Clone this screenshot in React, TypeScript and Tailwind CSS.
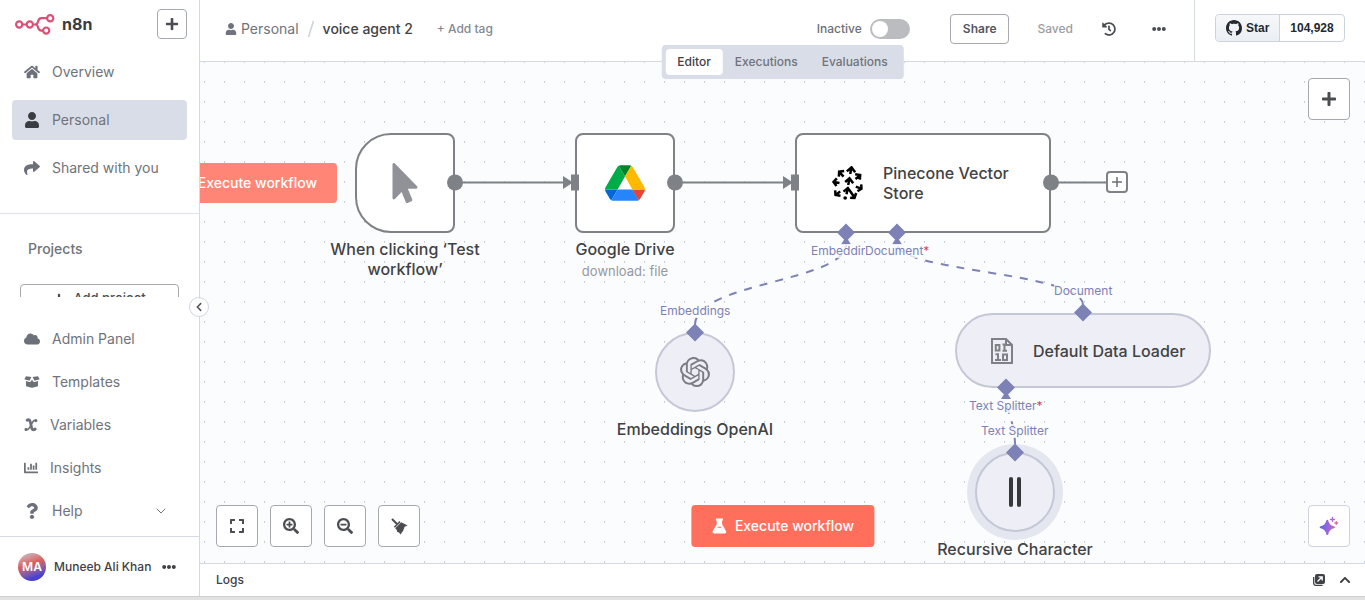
import type { ReactNode } from "react";
import {
  FaChartBar, FaChevronLeft, FaChevronUp, FaCloud, FaEllipsisH, FaExpand, FaFlask, FaHistory, FaHome,
  FaMousePointer, FaPlus, FaQuestion, FaSearchMinus, FaSearchPlus, FaShare, FaUser,
} from "react-icons/fa";
import { SiOpenai } from "react-icons/si";
import { ChevronDown } from "lucide-react";

function N8nLogo() {
  return (
    <svg width="40" height="21" viewBox="0 0 40 21" fill="none" stroke="#dc4f76" strokeWidth="2.2" aria-hidden="true">
      <circle cx="4.2" cy="10.5" r="3.1" />
      <circle cx="14.8" cy="10.5" r="3.1" />
      <circle cx="35.2" cy="4.2" r="3.1" />
      <circle cx="31.2" cy="16.6" r="3.1" />
      <path d="M7.4 10.5h4.2M18 10.5h2c1.800 0 2.600-1 3-2.800.5-2.300 1.500-3.500 3.500-3.500h5.600M20 10.500c1.800 0 2.600 1 3 2.800.5 2.300 1.500 3.300 3.300 3.300h1.700" />
    </svg>
  );
}

function GithubMark() {
  return (
    <svg width="16" height="16" viewBox="0 0 16 16" fill="currentColor" aria-hidden="true">
      <path d="M8 0C3.58 0 0 3.58 0 8c0 3.54 2.29 6.53 5.47 7.59.4.07.55-.17.55-.38 0-.19-.01-.82-.01-1.49-2.01.37-2.53-.49-2.69-.94-.09-.23-.48-.94-.82-1.13-.28-.15-.68-.52-.01-.53.63-.01 1.08.58 1.23.82.72 1.21 1.87.87 2.33.66.07-.52.28-.87.51-1.07-1.78-.2-3.64-.89-3.64-3.95 0-.87.31-1.59.82-2.15-.08-.2-.36-1.02.08-2.12 0 0 .67-.21 2.2.82.64-.18 1.32-.27 2-.27s1.36.09 2 .27c1.53-1.04 2.2-.82 2.2-.82.44 1.1.16 1.92.08 2.12.51.56.82 1.27.82 2.15 0 3.07-1.87 3.75-3.65 3.95.29.25.54.73.54 1.48 0 1.07-.01 1.93-.01 2.2 0 .21.15.46.55.38A8.013 8.013 0 0 0 16 8c0-4.42-3.58-8-8-8z" />
    </svg>
  );
}

function VariableIcon() {
  return (
    <svg width="14" height="16" viewBox="0 0 14 16" fill="none" stroke="currentColor" strokeLinecap="round" aria-hidden="true">
      <path d="M3 3.200C5.200 2 6 3.300 6.600 6l.8 4c.6 2.800 1.600 3.600 3.800 2" strokeWidth="2.800" />
      <path d="M12 3.300C9.800 2.500 8.800 4.500 7 8c-1.600 3.200-2.800 5.500-5.200 4.700" strokeWidth="1.500" />
      <circle cx="11.900" cy="3.600" r=".9" strokeWidth="1.300" />
      <circle cx="2" cy="12.400" r=".9" strokeWidth="1.300" />
    </svg>
  );
}

function OpenBoxIcon() {
  return (
    <svg width="16" height="16" viewBox="0 0 16 16" fill="currentColor" aria-hidden="true">
      <path d="M2 2.200 7.400 3 5.800 6.200a.8.8 0 0 1-.9.400L1 5.500a.6.600 0 0 1-.4-.8zM14 2.200 8.600 3l1.600 3.200a.8.8 0 0 0 .9.400L15 5.500a.6.600 0 0 0 .4-.8z" />
      <path d="M2 7l3.300.9a1.500 1.500 0 0 0 1.700-.7L8 5.400l1 1.800a1.500 1.500 0 0 0 1.700.7L14 7v4.600a1 1 0 0 1-.8 1L8.300 13.700h-.6l-4.900-1.100a1 1 0 0 1-.8-1z" />
    </svg>
  );
}

function DriveIcon() {
  return (
    <svg width="40" height="36" viewBox="0 0 87.3 78" aria-hidden="true">
      <path fill="#0066da" d="m6.600 66.850 3.850 6.650c.8 1.400 1.950 2.500 3.300 3.300l13.750-23.800H0c0 1.550.4 3.100 1.200 4.500z" />
      <path fill="#00ac47" d="M43.650 25 29.900 1.200c-1.350.8-2.500 1.900-3.300 3.300l-25.400 44A9.060 9.060 0 0 0 0 53h27.500z" />
      <path fill="#ea4335" d="M73.550 76.800c1.350-.8 2.500-1.900 3.300-3.300l1.600-2.750 7.650-13.250c.8-1.400 1.200-2.950 1.200-4.500H59.798l5.852 11.500z" />
      <path fill="#00832d" d="M43.650 25 57.400 1.200C56.050.4 54.500 0 52.900 0H34.400c-1.600 0-3.150.45-4.500 1.200z" />
      <path fill="#2684fc" d="M59.800 53H27.500L13.750 76.800c1.350.8 2.900 1.200 4.500 1.200h50.800c1.600 0 3.150-.45 4.500-1.200z" />
      <path fill="#ffba00" d="m73.400 26.500-12.700-22c-.8-1.400-1.950-2.500-3.300-3.300L43.650 25 59.800 53h27.450c0-1.550-.4-3.100-1.200-4.500z" />
    </svg>
  );
}

function PineconeIcon() {
  return (
    <svg width="31" height="34" viewBox="0 0 92 102" fill="none" stroke="#000" strokeWidth="7.500" aria-hidden="true">
      <circle cx="39" cy="96" r="5.500" fill="#000" stroke="none" />
      <path d="M43 85l4-18M34 77l13-11 11 15M48 57l4-18M39 48l13-11 11 15M54 24l4-18M44 16l14-12 11 15" />
      <path d="M34 32 22 18M20 32l1-15 15-2M22 51 5 48M14 37 4 48l9 12M24 76 11 87M9 73l1 14 15 2M57 80l10 14M54 95l13 1 5-15M71 62l16 6M87 55l1 13-12 8M70 39l14-11M69 25l15 2-1 14" />
    </svg>
  );
}

function BinaryIcon() {
  return (
    <svg width="24" height="28" viewBox="0 0 24 28" fill="none" stroke="#7f8187" strokeWidth="2" aria-hidden="true">
      <path d="M2 2h14l6 6v18H2zM16 2v6h6" />
      <path d="M5.800 8h3.600v5.500H5.800zM14.500 14V7.500h-2M12.500 13.700h4.500M13 17.500h4v5.500h-4zM8 23.500v-6.300H5.500M5 23h6" />
    </svg>
  );
}

function TidyIcon() {
  return (
    <svg width="17" height="17" viewBox="0 0 17 17" aria-hidden="true">
      <path d="M1 1 6 6" stroke="currentColor" strokeWidth="2" />
      <path d="M3.400 9.200 9 3.600" stroke="currentColor" strokeWidth="1.500" />
      <path fill="currentColor" d="M4.200 10.300 10.200 4.300 16.600 7.500l-3 1.300-1.400 4L9.400 16.500 8 14.400l-2-.6-.2-1.700z" />
    </svg>
  );
}

function LogWindowIcon() {
  return (
    <svg width="12" height="12" viewBox="0 0 12 12" fill="none" aria-hidden="true">
      <path d="M9.500 11.300H2.700A2 2 0 0 1 .7 9.300V3" stroke="currentColor" strokeWidth="1.300" />
      <rect x="2" y="0" width="10" height="10" rx="2" fill="currentColor" />
      <path d="M4.500 7.500l4.500-4.500M5.500 2.800h3.700v3.700" stroke="#fff" strokeWidth="1.300" />
    </svg>
  );
}

function AssistantIcon() {
  return (
    <svg width="20" height="20" viewBox="0 0 20 20" aria-hidden="true">
      <defs>
        <linearGradient id="assistant" gradientUnits="userSpaceOnUse" x1="2" y1="10" x2="19" y2="12">
          <stop offset="0" stopColor="#6068e8" />
          <stop offset=".5" stopColor="#a566d8" />
          <stop offset="1" stopColor="#e8708c" />
        </linearGradient>
      </defs>
      <path fill="url(#assistant)" d="M8.300 3.700c.6 0 .8.4 1 1 .8 3 2.600 4.800 5.600 5.600.6.2 1 .4 1 1s-.4.800-1 1c-3 .8-4.800 2.600-5.600 5.600-.2.600-.4 1-1 1s-.8-.4-1-1c-.8-3-2.600-4.800-5.600-5.600-.6-.2-1-.4-1-1s.4-.8 1-1c3-.8 4.800-2.600 5.600-5.600.2-.6.4-1 1-1z" />
      <path stroke="url(#assistant)" strokeWidth="1.300" strokeLinecap="round" d="M13.500 1.500v4M11.500 3.501 15.500 3.500M17.300 5.600v2.800M15.900 7.001 18.700 7" />
    </svg>
  );
}

function NavItem({ icon, label, active = false, tall = false, children }: {
  icon: ReactNode; label: string; active?: boolean; tall?: boolean; children?: ReactNode;
}) {
  return (
    <a
      href="#"
      className={`flex items-center gap-3 rounded-sm px-3 text-sm text-[#70737b] ${tall ? "h-10" : "h-9"} ${active ? "bg-[#d9dde8]" : ""}`}
    >
      <span className={active ? "text-[#3b3d42]" : "text-[#6c7079]"}>{icon}</span>
      <span>{label}</span>
      {children}
    </a>
  );
}

function Sidebar() {
  return (
    <aside className="relative z-20 flex w-[200px] shrink-0 flex-col border-r border-[#d5d9e2] bg-white">
      <div className="flex items-center justify-between pt-[9px] pr-3 pb-[13px] pl-[15px]">
        <a href="#" className="flex items-center gap-[7px]">
          <N8nLogo />
          <span className="text-base font-bold text-[#3a3b40]">n8n</span>
        </a>
        <button aria-label="Create" className="flex size-[30px] items-center justify-center rounded-sm border border-[#a5a8ae] text-[#4b4d52]">
          <FaPlus size={14} />
        </button>
      </div>
      <nav className="flex flex-col gap-2 px-3 pb-[25px]">
        <NavItem tall icon={<FaHome size={16} />} label="Overview" />
        <NavItem tall active icon={<FaUser size={16} />} label="Personal" />
        <NavItem tall icon={<FaShare size={16} />} label="Shared with you" />
      </nav>
      <div className="min-h-0 flex-1 overflow-hidden border-t border-[#dfe2e8]">
        <h2 className="pt-[25px] pl-7 text-sm font-medium text-[#70737b]">Projects</h2>
        <div className="mt-[25px] px-5">
          <button className="flex h-[30px] w-full items-center justify-center gap-2 rounded-sm border border-[#a5a8ae] text-[13px] font-medium text-[#4b4d52]">
            <FaPlus size={12} /> Add project
          </button>
        </div>
      </div>
      <nav className="mt-6 flex flex-col gap-[7px] px-3 pb-[7px]">
        <NavItem icon={<FaCloud size={16} />} label="Admin Panel" />
        <NavItem icon={<OpenBoxIcon />} label="Templates" />
        <NavItem icon={<VariableIcon />} label="Variables" />
        <NavItem icon={<FaChartBar size={14} />} label="Insights" />
        <NavItem icon={<FaQuestion size={16} />} label="Help">
          <ChevronDown size={16} strokeWidth={1.5} className="mr-1.5 ml-auto" />
        </NavItem>
      </nav>
      <div className="flex h-[60px] items-center border-t border-[#d5d9e2] pl-[18px]">
        <span className="flex size-7 items-center justify-center rounded-full bg-linear-160 from-[#b9c9dc] via-[#d9605c] via-40% to-[#4a3fd0] to-80% text-xs font-semibold text-white">MA</span>
        <span className="ml-2 text-xs font-medium text-[#3f4146]">Muneeb Ali Khan</span>
        <button aria-label="User menu" className="ml-[11px] text-[#3f4146]"><FaEllipsisH size={14} /></button>
      </div>
      <button aria-label="Collapse sidebar" className="absolute top-[297px] -right-[10px] flex size-5 items-center justify-center rounded-full border border-[#d0d4de] bg-white text-[#55575c]">
        <FaChevronLeft size={10} />
      </button>
    </aside>
  );
}

function Header() {
  return (
    <header className="flex h-[62px] shrink-0 border-b border-[#d5d9e2] bg-white">
      <div className="flex min-w-0 flex-1 items-center pr-7 pb-[3px] pl-[25px]">
        <a href="#" className="flex items-center gap-1 text-sm text-[#70737b]"><FaUser size={12} />Personal</a>
        <svg width="8" height="20" viewBox="0 0 8 20" className="mx-2" aria-hidden="true">
          <path d="M1.500 18 6.500 2" stroke="#ced2da" strokeWidth="1.500" />
        </svg>
        <h1 className="text-sm font-medium text-[#3f4146]">voice agent 2</h1>
        <button className="ml-6 text-xs font-medium text-[#85888f]">+ Add tag</button>
        <div className="ml-auto flex items-center">
          <label htmlFor="active" className="text-xs font-medium text-[#6c6f76]">Inactive</label>
          <input id="active" type="checkbox" role="switch" className="ml-2 h-5 w-10 appearance-none rounded-full bg-[#babcc0] before:m-0.5 before:block before:size-4 before:rounded-full before:bg-white" />
          <button className="ml-10 h-[30px] rounded-sm border border-[#a5a8ae] px-3 text-xs font-semibold text-[#55575c]">Share</button>
          <span className="ml-7 text-xs font-medium text-[#9b9da2]">Saved</span>
          <button aria-label="Workflow history" className="ml-[29px] text-[#4b4d52]"><FaHistory size={14} /></button>
          <button aria-label="More actions" className="ml-9 text-[#4b4d52]"><FaEllipsisH size={14} /></button>
        </div>
      </div>
      <div className="flex w-[171px] shrink-0 items-start border-l border-[#d5d9e2] pt-[14px] pl-5">
        <div className="flex h-7 rounded-sm border border-[#cdd3da] font-['Liberation_Sans',sans-serif] text-xs font-bold text-[#24292f]">
          <a href="#" className="flex items-center gap-1 rounded-l-sm border-r border-[#cdd3da] bg-linear-to-b from-[#f6f8fa] to-[#ebeff3] px-[10px] text-sm">
            <GithubMark /><span className="text-xs">Star</span>
          </a>
          <a href="#" className="flex items-center px-[10px]">104,928</a>
        </div>
      </div>
    </header>
  );
}

function ViewTabs() {
  return (
    <div role="tablist" className="absolute -top-[17px] left-1/2 z-10 flex -translate-x-1/2 rounded-sm bg-[#d9dde8] p-1 text-xs font-medium text-[#70737b]">
      <button role="tab" aria-selected="true" className="h-[26px] rounded-sm bg-white px-3 text-[#3f4146]">Editor</button>
      <button role="tab" aria-selected="false" className="h-[26px] px-3">Executions</button>
      <button role="tab" aria-selected="false" className="h-[26px] px-3">Evaluations</button>
    </div>
  );
}

function CanvasButton({ label, children }: { label: string; children: ReactNode }) {
  return (
    <button aria-label={label} className="flex size-[42px] items-center justify-center rounded-sm border border-[#a5a8ae] bg-white text-[#4b4d52]">
      {children}
    </button>
  );
}

function Connections() {
  return (
    <svg className="absolute top-0 left-0 size-full" fill="none" aria-hidden="true">
      <g stroke="#7e8186" strokeWidth="2">
        <path d="M262 120.500h104M482 120.500h104M858 120.500h48" />
      </g>
      <g fill="#7e8186">
        <path d="M363 114l10 6.500-10 6.500zM583 114l10 6.500-10 6.500z" />
      </g>
      <g stroke="#7d81b5" strokeWidth="2" strokeDasharray="8 8">
        <path d="M495 263C495 220 646 220 646 182" />
        <path d="M883 243C883 210 697 210 697 182" />
        <path d="M815 383C815 360 806 350 806 333" />
      </g>
      <g fill="#7d81b5">
        <path d="M641 182.500h10l-5-8zM692 182.500h10l-5-8zM801 337h10l-5-8z" />
      </g>
    </svg>
  );
}

function Ports() {
  return (
    <svg className="pointer-events-none absolute top-0 left-0 size-full" aria-hidden="true">
      <g fill="#7e8186">
        <circle cx="255" cy="120.500" r="8" />
        <circle cx="475" cy="120.500" r="8" />
        <circle cx="851" cy="120.500" r="8" />
        <path d="M371 112.500h8v16h-8zM591 112.500h8v16h-8z" />
      </g>
      <g fill="#7d81b5">
        <path d="M646 161.500l9 9-9 9-9-9zM697 161.500l9 9-9 9-9-9zM495 261.500l9 9-9 9-9-9zM883 241.500l9 9-9 9-9-9zM806 316.500l9 9-9 9-9-9zM815 381.500l9 9-9 9-9-9z" />
      </g>
    </svg>
  );
}

function PortLabel({ place, children }: { place: string; children: ReactNode }) {
  return <span className={`absolute bg-[#fbfcfe]/80 text-xs leading-[14px] whitespace-nowrap text-[#7d81b5] ${place}`}>{children}</span>;
}

function NodeLabel({ place, children }: { place: string; children: ReactNode }) {
  return <div className={`absolute -translate-x-1/2 text-center leading-5 font-medium text-[#414244] ${place}`}>{children}</div>;
}

function Canvas() {
  return (
    <main className="relative min-h-0 flex-1">
      <ViewTabs />
      <div className="absolute inset-0 overflow-hidden bg-[#fbfcfe]">
        <svg className="absolute inset-0 size-full" aria-hidden="true">
          <defs>
            <pattern id="dots" width="20" height="20" patternUnits="userSpaceOnUse">
              <rect x="4" y="19" width="1" height="1" fill="#c3c6cd" />
              <rect x="4" y="0" width="1" height="1" fill="#d3d6dc" />
            </pattern>
          </defs>
          <rect width="100%" height="100%" fill="url(#dots)" />
        </svg>
        <Connections />

        <button className="absolute top-[101px] -left-[46px] flex h-10 items-center gap-2 rounded-sm bg-[#ff8576] px-5 text-sm font-medium whitespace-nowrap text-white">
          <FaFlask size={14} />
          <span className="w-[121px] text-right">Execute workflow</span>
        </button>

        <div className="absolute top-[71px] left-[155px] flex size-[100px] items-center justify-center rounded-l-[36px] rounded-r-lg border-2 border-[#7e8186] bg-white text-[#909298]">
          <FaMousePointer size={40} />
        </div>
        <NodeLabel place="top-[177px] left-[205px] w-[160px]">When clicking ‘Test workflow’</NodeLabel>

        <div className="absolute top-[71px] left-[375px] flex size-[100px] items-center justify-center rounded-lg border-2 border-[#7e8186] bg-white">
          <DriveIcon />
        </div>
        <NodeLabel place="top-[177px] left-[425px] w-[160px]">
          Google Drive
          <p className="mt-0.5 text-[13px] font-normal text-[#96989e]">download: file</p>
        </NodeLabel>

        <div className="absolute top-[71px] left-[595px] flex h-[100px] w-[256px] items-center gap-5 rounded-lg border-2 border-[#7e8186] bg-white px-[35px] leading-5 font-medium text-[#414244]">
          <span className="shrink-0"><PineconeIcon /></span>
          <span>Pinecone Vector Store</span>
        </div>
        <button aria-label="Add node after Pinecone Vector Store" className="absolute top-[109px] left-[906px] flex size-[22px] items-center justify-center rounded-sm border-2 border-[#7e8186] bg-white">
          <svg width="10" height="10" viewBox="0 0 10 10" stroke="#6c6f75" strokeWidth="1.500" aria-hidden="true"><path d="M5 0v10M0 5h10" /></svg>
        </button>

        <div className="absolute top-[270px] left-[455px] flex size-20 items-center justify-center rounded-full border-2 border-[#c4c8d6] bg-[#eeeff6] text-[#7b7d83]">
          <SiOpenai size={30} />
        </div>
        <NodeLabel place="top-[357px] left-[495px] w-[200px]">Embeddings OpenAI</NodeLabel>

        <div className="absolute top-[251px] left-[755px] flex h-[75px] w-[256px] items-center gap-[19px] rounded-full border-2 border-[#c4c8d6] bg-[#eeeff6] pl-[33px] font-medium text-[#414244]">
          <BinaryIcon />
          <span>Default Data Loader</span>
        </div>

        <div className="absolute top-[390px] left-[775px] flex size-20 items-center justify-center gap-1 rounded-full border-2 border-[#c4c8d6] bg-[#eeeff6] ring-8 ring-[#e4e7f0]">
          <span className="h-[30px] w-1 rounded-xs bg-[#353738]" />
          <span className="h-[30px] w-1 rounded-xs bg-[#353738]" />
        </div>
        <NodeLabel place="top-[477px] left-[815px] w-[160px]">Recursive Character</NodeLabel>

        <PortLabel place="top-[182px] left-[611px] w-[54px] overflow-hidden">Embeddings</PortLabel>
        <PortLabel place="top-[182px] left-[665px]">Document<span className="text-[#d8455b]">*</span></PortLabel>
        <PortLabel place="top-[242px] left-[460px]">Embeddings</PortLabel>
        <PortLabel place="top-[222px] left-[854px]">Document</PortLabel>
        <PortLabel place="top-[337px] left-[769px]">Text Splitter<span className="text-[#d8455b]">*</span></PortLabel>
        <PortLabel place="top-[362px] left-[781px]">Text Splitter</PortLabel>
        <Ports />
      </div>

      <div className="absolute top-4 right-[15px]">
        <CanvasButton label="Add node"><FaPlus size={16} /></CanvasButton>
      </div>
      <div className="absolute bottom-4 left-4 flex gap-3">
        <CanvasButton label="Fit to view"><FaExpand size={16} /></CanvasButton>
        <CanvasButton label="Zoom in"><FaSearchPlus size={16} /></CanvasButton>
        <CanvasButton label="Zoom out"><FaSearchMinus size={16} /></CanvasButton>
        <CanvasButton label="Tidy up"><TidyIcon /></CanvasButton>
      </div>
      <button className="absolute bottom-4 left-1/2 flex h-[42px] -translate-x-1/2 items-center gap-2 rounded-sm bg-[#ff6f5c] px-5 text-sm font-medium whitespace-nowrap text-white">
        <svg width="16" height="16" viewBox="0 0 16 16" aria-hidden="true">
          <path fill="currentColor" d="M4.500.5h7v2h-.8V6.300l3.900 6.600c.7 1.200-.1 2.600-1.400 2.600H2.800c-1.300 0-2.100-1.400-1.400-2.600l3.900-6.600V2.500h-.8z" />
          <path d="M6.200 9.300h3.600" stroke="#ff6f5c" strokeWidth="1" />
        </svg>
        Execute workflow
      </button>
      <button aria-label="Ask assistant" className="absolute right-[15px] bottom-4 flex size-[42px] items-center justify-center rounded-sm border border-[#cfd3de] bg-white">
        <AssistantIcon />
      </button>
    </main>
  );
}

export default function App() {
  return (
    <div className="flex h-screen flex-col bg-white font-[Inter,sans-serif]">
      <div className="flex min-h-0 flex-1">
        <Sidebar />
        <div className="flex min-w-0 flex-1 flex-col">
          <Header />
          <Canvas />
          <footer className="flex h-[33px] shrink-0 items-center border-t border-[#d5d9e2] bg-white px-4 text-[#3f4146]">
            <h2 className="text-xs font-medium">Logs</h2>
            <button aria-label="Open logs in a new window" className="mr-[14px] ml-auto"><LogWindowIcon /></button>
            <button aria-label="Expand logs" className="-mr-0.5"><FaChevronUp size={12} /></button>
          </footer>
        </div>
      </div>
      <div className="h-1 shrink-0 border-t border-[#cfcfd1] bg-[#e2e2e2]" />
    </div>
  );
}
